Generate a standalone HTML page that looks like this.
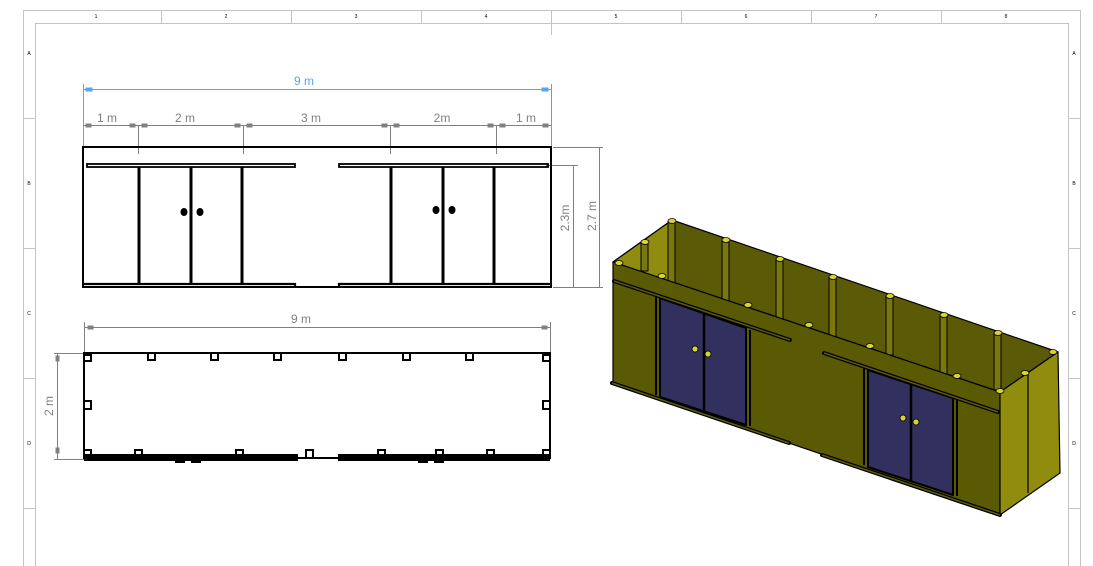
<!DOCTYPE html>
<html><head><meta charset="utf-8"><style>
html,body{margin:0;padding:0;background:#fff;width:1093px;height:566px;overflow:hidden}
svg{display:block}
text{font-family:"Liberation Sans",sans-serif}
</style></head><body>
<svg width="1093" height="566" viewBox="0 0 1093 566" xmlns="http://www.w3.org/2000/svg">
<g stroke="#c4c4c4" stroke-width="1" fill="none">
<path d="M23.5 566V10.5H1080.5V566"/>
<path d="M35.5 566V23.5H1068.5V566"/>
<path d="M161.5 10V23M291.5 10V23M421.5 10V23M551.5 10V35M681.5 10V23M811.5 10V23M941.5 10V23"/>
<path d="M23 118.5H35M23 248.5H35M23 378.5H35M23 508.5H35"/>
<path d="M1068 118.5H1080M1068 248.5H1080M1068 378.5H1080M1068 508.5H1080"/>
</g>
<g font-size="5" fill="#000" text-anchor="middle">
<text x="96" y="18">1</text><text x="226" y="18">2</text><text x="356" y="18">3</text><text x="486" y="18">4</text>
<text x="616" y="18">5</text><text x="746" y="18">6</text><text x="876" y="18">7</text><text x="1006" y="18">8</text>
<text x="29" y="55">A</text><text x="29" y="185">B</text><text x="29" y="315">C</text><text x="29" y="445">D</text>
<text x="1074" y="55">A</text><text x="1074" y="185">B</text><text x="1074" y="315">C</text><text x="1074" y="445">D</text>
</g>

<g stroke="#55a5f0" stroke-width="1" fill="#55a5f0">
<path d="M83.5 84V154M551.5 84V154M83 89.5H551"/>
<rect x="86" y="88" width="6" height="3"/><rect x="542" y="88" width="6" height="3"/>
</g>
<text x="304" y="85" font-size="12" fill="#55a5f0" text-anchor="middle">9 m</text>
<g stroke="#808080" stroke-width="1" fill="#808080">
<path d="M83 125.5H551M138.5 125V154M243.5 125V154M390.5 125V154M496.5 125V154"/>
<rect x="86" y="124" width="5" height="3"/><rect x="130" y="124" width="5" height="3"/><rect x="142" y="124" width="5" height="3"/>
<rect x="235" y="124" width="5" height="3"/><rect x="247" y="124" width="5" height="3"/><rect x="382" y="124" width="5" height="3"/>
<rect x="394" y="124" width="5" height="3"/><rect x="488" y="124" width="5" height="3"/><rect x="500" y="124" width="5" height="3"/>
<rect x="543" y="124" width="5" height="3"/>
<path d="M553 147.5H603M546 165.5H578M553 287.5H603M573.5 165V287M599.5 147V287"/>
</g>
<g font-size="12" fill="#808080" text-anchor="middle">
<text x="107" y="122">1 m</text><text x="185" y="122">2 m</text><text x="311" y="122">3 m</text><text x="442" y="122">2m</text><text x="526" y="122">1 m</text>
<text transform="translate(569 218) rotate(-90)">2.3m</text>
<text transform="translate(596 216) rotate(-90)">2.7 m</text>
</g>
<g stroke="#000" fill="none">
<rect x="83" y="147" width="468" height="140" stroke-width="2"/>
<rect x="87" y="164" width="208" height="3" stroke-width="1.8"/>
<rect x="339" y="164" width="209" height="3" stroke-width="1.8"/>
<path d="M83 284H295V287M339 287V284H551" stroke-width="2.2"/>
<path d="M139 167V284M191 167V284M242 167V284M391 167V284M443 167V284M494 167V284" stroke-width="3"/>
</g>
<g fill="#000"><ellipse cx="184" cy="212" rx="3.5" ry="4"/><ellipse cx="200" cy="212" rx="3.5" ry="4"/><ellipse cx="436" cy="210" rx="3.5" ry="4"/><ellipse cx="452" cy="210" rx="3.5" ry="4"/></g>

<g stroke="#808080" stroke-width="1" fill="#808080">
<path d="M84.5 322V353M550.5 322V353M84 327.5H550M57.5 353V459M54 353.5H84M54 459.5H84"/>
<rect x="88" y="326" width="5" height="3"/><rect x="542" y="326" width="5" height="3"/>
<rect x="56" y="356" width="3" height="5"/><rect x="56" y="448" width="3" height="5"/>
</g>
<text x="301" y="323" font-size="12" fill="#808080" text-anchor="middle">9 m</text>
<text transform="translate(53 406) rotate(-90)" font-size="12" fill="#808080" text-anchor="middle">2 m</text>
<g stroke="#000" fill="none" stroke-width="2">
<rect x="84" y="353" width="466" height="105"/>
<path d="M85 355h6v6h-6M148 354v6h7v-6M211 354v6h7v-6M274 354v6h7v-6M339 354v6h7v-6M403 354v6h7v-6M466 354v6h7v-6M549 355h-6v6h6"/>
<path d="M85 401h6v8h-6M549 401h-6v8h6"/>
<path d="M85 450h6v7M549 450h-6v7M135 457v-7h7v7M236 457v-7h7v7M306 457v-7h7v7M378 457v-7h7v7M436 457v-7h7v7M487 457v-7h7v7"/>
</g>
<path d="M84 454H298V461H84ZM338 454H550V461H338Z" fill="#000"/>
<rect x="175" y="459" width="10" height="4" fill="#000"/><rect x="191" y="459" width="10" height="4" fill="#000"/>
<rect x="418" y="459" width="10" height="4" fill="#000"/><rect x="434" y="459" width="10" height="4" fill="#000"/>

<g stroke="#000" stroke-width="1.2" stroke-linejoin="round">
<polygon points="672,220 1058,352 1000,392 613,262" fill="#5b5a06"/>
<polygon points="613,262 672,220 672,282 640,272" fill="#8f8c10"/>
<g fill="#7a780c" stroke-width="1">
<rect x="668" y="221" width="7" height="62"/>
<rect x="641" y="243" width="7" height="28"/>
<rect x="722" y="240" width="7" height="62"/>
<rect x="776" y="259" width="7" height="60"/>
<rect x="829" y="277" width="7" height="60"/>
<rect x="886" y="297" width="7" height="58"/>
<rect x="940" y="316" width="7" height="58"/>
<rect x="994" y="334" width="7" height="56"/>
</g>
<polygon points="613,262 1000,392 1000,515 613,383" fill="#5a5a05"/>
<polygon points="1000,392 1058,352 1060,473 1000,515" fill="#8f8c0e"/>
<path d="M1028 372V493" fill="none"/>
<polygon points="660,298 746,328 746,425 660,397" fill="#31305e" stroke-width="2"/>
<path d="M704 312V411" stroke-width="2.5"/>
<polygon points="868,370 953,398 953,495 868,467" fill="#31305e" stroke-width="2"/>
<path d="M911 384V481" stroke-width="2.5"/>
<path d="M656 296V395M750 330V426M864 368V465M957 400V496" stroke-width="2"/>
<path d="M614 281L790 340M824 353L998 412M612 383L789 443M822 455L1000 515" stroke-width="4" stroke-linecap="round"/>
<path d="M614 281L790 340M824 353L998 412M612 383L789 443M822 455L1000 515" stroke="#5a5a10" stroke-width="1.5"/>
</g>
<g fill="#d8d430" stroke="#000" stroke-width="0.8">
<ellipse cx="619" cy="263" rx="4" ry="2.5"/><ellipse cx="672" cy="221" rx="4" ry="2.5"/><ellipse cx="645" cy="242" rx="4" ry="2.5"/>
<ellipse cx="726" cy="240" rx="4" ry="2.5"/><ellipse cx="780" cy="259" rx="4" ry="2.5"/><ellipse cx="833" cy="277" rx="4" ry="2.5"/>
<ellipse cx="890" cy="296" rx="4" ry="2.5"/><ellipse cx="944" cy="315" rx="4" ry="2.5"/><ellipse cx="998" cy="333" rx="4" ry="2.5"/>
<ellipse cx="1053" cy="352" rx="4" ry="2.5"/><ellipse cx="1000" cy="391" rx="4" ry="2.5"/>
<ellipse cx="662" cy="276" rx="4" ry="2.5"/><ellipse cx="748" cy="305" rx="4" ry="2.5"/><ellipse cx="809" cy="325" rx="4" ry="2.5"/>
<ellipse cx="870" cy="346" rx="4" ry="2.5"/><ellipse cx="957" cy="376" rx="4" ry="2.5"/><ellipse cx="1025" cy="373" rx="4" ry="2.5"/>
<circle cx="695" cy="349" r="3"/><circle cx="708" cy="354" r="3"/><circle cx="903" cy="418" r="3"/><circle cx="916" cy="422" r="3"/>
</g>
</svg>
</body></html>
